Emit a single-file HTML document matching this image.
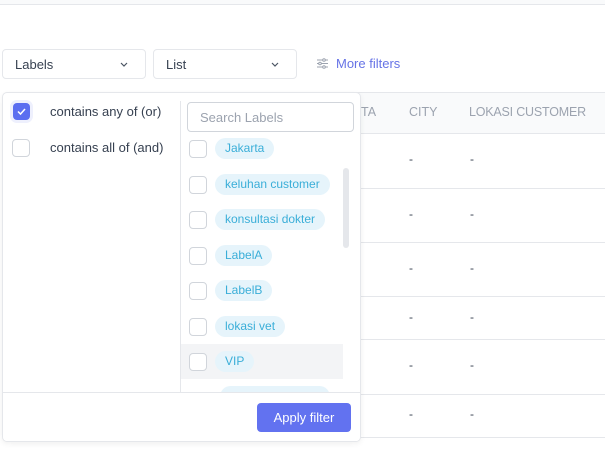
<!DOCTYPE html>
<html><head><style>
*{box-sizing:border-box;margin:0;padding:0}
body{width:605px;height:451px;background:#fff;font-family:"Liberation Sans",sans-serif;position:relative;overflow:hidden;color:#374151}
.abs{position:absolute}
.sel{position:absolute;top:49px;height:30px;border:1px solid #e5e7eb;border-radius:4px;font-size:13px;color:#374151;padding:7px 12px}
.chev{position:absolute;right:16px;top:9px}
.hl{position:absolute;left:355px;width:250px;height:1px;background:#e5e7eb}
.dash{position:absolute;font-size:12px;color:#374151}
.cb{position:absolute;width:18px;height:18px;border:1px solid #d1d5db;border-radius:4px;background:#fff}
.pill{position:absolute;height:21px;border-radius:11px;background:#e6f4fb;color:#3aaed8;font-size:12px;padding:3px 10px;white-space:nowrap}
</style></head><body>
<div class="abs" style="left:0;top:0;width:605px;height:5px;background:#f9fafb;border-bottom:1px solid #e5e7eb"></div>
<div class="sel" style="left:2px;width:144px">Labels<svg class="chev" width="10" height="10" viewBox="0 0 10 10"><path d="M2 4l3 3 3-3" stroke="#4b5563" stroke-width="1.2" fill="none"/></svg></div>
<div class="sel" style="left:153px;width:144px">List<svg class="chev" width="10" height="10" viewBox="0 0 10 10"><path d="M2 4l3 3 3-3" stroke="#4b5563" stroke-width="1.2" fill="none"/></svg></div>
<svg class="abs" style="left:316px;top:57px" width="13" height="13" viewBox="0 0 13 13"><g stroke="#9ca3af" stroke-width="1"><path d="M1 3h11M1 6.5h11M1 10h11"/></g><g fill="#fff" stroke="#9ca3af"><circle cx="8" cy="3" r="1.3"/><circle cx="4" cy="6.5" r="1.3"/><circle cx="8" cy="10" r="1.3"/></g></svg>
<div class="abs" style="left:336px;top:56px;font-size:13px;color:#6673e6">More filters</div>

<div class="abs" style="left:355px;top:92px;width:250px;height:41px;background:#f9fafb;border-top:1px solid #e5e7eb"></div>
<div class="abs" style="left:361px;top:105px;font-size:12.5px;color:#9ca3af">TA</div>
<div class="abs" style="left:409px;top:105px;font-size:12.5px;color:#9ca3af">CITY</div>
<div class="abs" style="left:469px;top:105px;font-size:12.5px;color:#9ca3af;letter-spacing:-0.2px">LOKASI CUSTOMER</div>
<div class="hl" style="top:133px"></div><div class="hl" style="top:188px"></div><div class="hl" style="top:242px"></div><div class="hl" style="top:296px"></div><div class="hl" style="top:339px"></div><div class="hl" style="top:394px"></div><div class="hl" style="top:437px"></div>
<div class="dash" style="left:409px;top:152px">-</div><div class="dash" style="left:470px;top:152px">-</div>
<div class="dash" style="left:409px;top:207px">-</div><div class="dash" style="left:470px;top:207px">-</div>
<div class="dash" style="left:409px;top:261px">-</div><div class="dash" style="left:470px;top:261px">-</div>
<div class="dash" style="left:409px;top:310px">-</div><div class="dash" style="left:470px;top:310px">-</div>
<div class="dash" style="left:409px;top:358px">-</div><div class="dash" style="left:470px;top:358px">-</div>
<div class="dash" style="left:409px;top:407px">-</div><div class="dash" style="left:470px;top:407px">-</div>

<div class="abs" style="left:2px;top:92px;width:359px;height:350px;background:#fff;border:1px solid #e5e7eb;border-radius:5px;box-shadow:0 2px 6px rgba(0,0,0,.06);overflow:hidden">
 <div class="abs" style="left:177px;top:8px;width:1px;height:292px;background:#e5e7eb"></div>
 <div class="abs" style="left:10px;top:10px;width:17px;height:17px;border-radius:4px;background:#5b6ef0;box-shadow:0 0 0 3px #eef0fd"><svg width="17" height="17" viewBox="0 0 17 17"><path d="M5 8.5l2.5 2.5 4.5-5" stroke="#fff" stroke-width="1.5" fill="none"/></svg></div>
 <div class="abs" style="left:47px;top:11px;font-size:13px;color:#374151">contains any of (or)</div>
 <div class="cb" style="left:9px;top:46px"></div>
 <div class="abs" style="left:47px;top:47px;font-size:13px;color:#374151">contains all of (and)</div>
 <div class="abs" style="left:184px;top:9px;width:167px;height:30px;border:1px solid #d1d5db;border-radius:4px;font-size:13px;color:#9ca3af;padding:7px 12px">Search Labels</div>
 <div class="abs" style="left:178px;top:251px;width:162px;height:35px;background:#f3f4f6"></div>
 <div class="abs" style="left:340px;top:75px;width:6px;height:80px;border-radius:3px;background:#e5e7eb"></div>
 <div class="cb" style="left:186px;top:47px"></div><div class="pill" style="left:212px;top:45px">Jakarta</div>
 <div class="cb" style="left:186px;top:83px"></div><div class="pill" style="left:212px;top:81px">keluhan customer</div>
 <div class="cb" style="left:186px;top:118px"></div><div class="pill" style="left:212px;top:116px">konsultasi dokter</div>
 <div class="cb" style="left:186px;top:154px"></div><div class="pill" style="left:212px;top:152px">LabelA</div>
 <div class="cb" style="left:186px;top:189px"></div><div class="pill" style="left:212px;top:187px">LabelB</div>
 <div class="cb" style="left:186px;top:225px"></div><div class="pill" style="left:212px;top:223px">lokasi vet</div>
 <div class="cb" style="left:186px;top:260px"></div><div class="pill" style="left:212px;top:258px">VIP</div>
 <div class="pill" style="left:217px;top:293px;width:110px"></div>
 <div class="abs" style="left:0;top:299px;width:359px;height:60px;background:#fff;border-top:1px solid #e5e7eb"></div>
 <div class="abs" style="left:254px;top:310px;width:94px;height:29px;border-radius:4px;background:#6272f0;color:#fff;font-size:13px;text-align:center;line-height:29px">Apply filter</div>
</div>
</body></html>
